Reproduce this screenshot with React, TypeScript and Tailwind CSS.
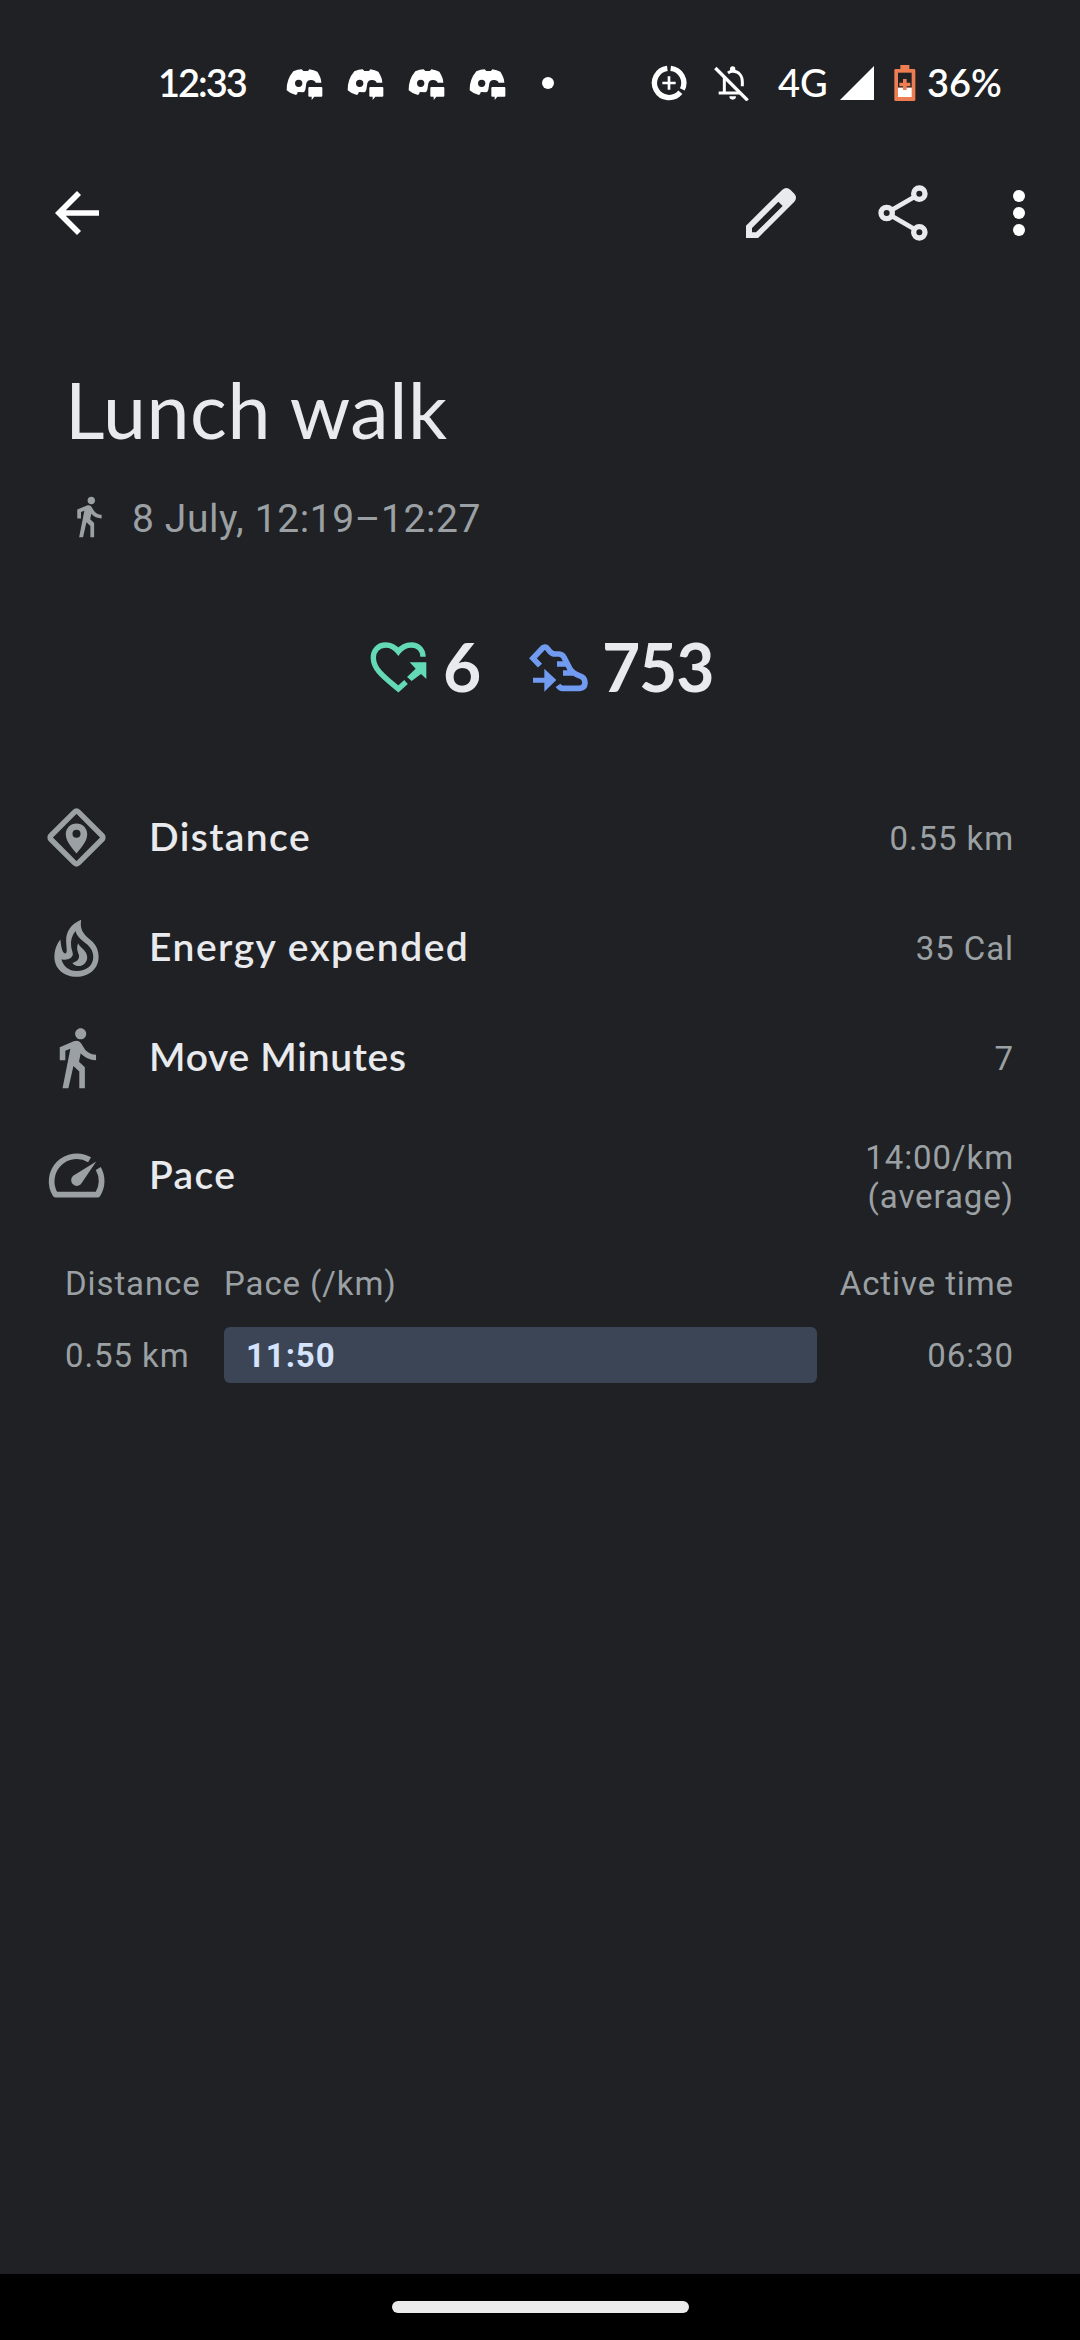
import type { ReactNode } from 'react'

const LATO = "font-['Lato','Liberation_Sans',sans-serif]"
const ROBOTO = "font-['Roboto','Liberation_Sans',sans-serif]"

interface Metric {
  label: string
  tracking: string
  lines: string[]
  icon: ReactNode
  height: string
}

function DiscordIcon() {
  return (
    <svg width="38" height="32" viewBox="0 0 114 96" className="shrink-0">
      <path
        fill="#fff"
        d="M22 7Q35 1 47 1L52 6H66L70 1Q84 3 94 8Q106 27 106 41H89Q86 33 76 33Q64 32 61 43L58 62Q56 70 50 70L38 69Q32 70 34 74L30 78Q12 74 2 64Q1 32 22 7Z"
      />
      <circle cx="38" cy="43" r="11" fill="#202124" />
      <path fill="#202124" d="M64 49h50v47H64z" />
      <path fill="#fff" d="M70 54h36q3 0 3 3v23q0 3-3 3H85l-8 10V83h-7q-3 0-3-3V57q0-3 3-3Z" />
    </svg>
  )
}

function DataSaverIcon() {
  return (
    <svg width="36" height="36" viewBox="0 0 108 108" fill="none" stroke="#fff" className="shrink-0">
      <path strokeWidth="16" d="M59 10A44 44 0 0 1 94 73" />
      <path strokeWidth="16" d="M49 10A44 44 0 1 0 88 82" />
      <path strokeWidth="8" d="M54 34V74M34 54H74" />
    </svg>
  )
}

function BellOffIcon() {
  return (
    <svg width="36" height="36" viewBox="0 0 108 108" fill="none" stroke="#fff" className="shrink-0">
      <path strokeWidth="9" d="M31 38V84M14 84H80M85 64V50C85 32 74 20 58 19Q50 18 42 24" />
      <path fill="#fff" stroke="none" d="M48 18V12a8 8 0 0 1 16 0v6ZM46 94H66a10 10 0 0 1-20 0Z" />
      <path strokeWidth="10" d="M4 9L101 106" />
    </svg>
  )
}

function BatteryIcon() {
  return (
    <svg width="22" height="36" viewBox="0 0 66 108" className="shrink-0">
      <path fill="#ee7e52" d="M19 0H46V12H60q4 0 4 4V104q0 4-4 4H5q-4 0-4-4V16q0-4 4-4H19Z" />
      <path fill="#202124" d="M12 23H53V68H12Z" />
      <path fill="#fff" d="M12 68H53V96H12Z" />
      <path fill="#ee7e52" d="M27 42h11v11h11v11H38v11H27V64H16V53H27Z" />
    </svg>
  )
}

function PencilIcon() {
  return (
    <svg width="50" height="50" viewBox="0 0 150 150">
      <path
        fill="#e8eaed"
        fillRule="evenodd"
        d="M0 150V113L109 5Q121-5 133 5L145 17Q155 29 145 41L36 150ZM18 133H30L110 54L97 41L18 120Z"
      />
    </svg>
  )
}

function ShareIcon() {
  return (
    <svg width="50" height="56" viewBox="0 0 150 168" fill="none" stroke="#e8eaed" strokeWidth="16">
      <circle cx="124" cy="26" r="17" />
      <circle cx="26" cy="84" r="17" />
      <circle cx="124" cy="142" r="17" />
      <path strokeWidth="14" d="M40 76L110 35M40 92L110 133" />
    </svg>
  )
}

function WalkIcon({ size }: { size: number }) {
  return (
    <svg width={size} height={size} viewBox="0 0 24 24" fill="#9aa0a3" className="shrink-0">
      <path d="M13.500 5.500c1.100 0 2-.9 2-2s-.9-2-2-2-2 .9-2 2 .9 2 2 2zM9.800 8.900L7 23h2.100l1.800-8 2.100 2v6h2v-7.500l-2.100-2 .6-3C14.800 12 16.800 13 19 13v-2c-1.900 0-3.500-1-4.300-2.400l-1-1.600c-.4-.6-1-1-1.700-1-.3 0-.5.1-.8.1L6 8.300V13h2V9.600l1.800-.7" />
    </svg>
  )
}

function HeartPointsIcon() {
  return (
    <svg width="57" height="52" viewBox="0 0 171 156" className="shrink-0">
      <path
        fill="none"
        stroke="#63dab4"
        strokeWidth="16"
        d="M159 47C159 26 144 12 124 12C107 12 94 20 85 32C76 20 63 12 47 12C25 12 10 28 10 50C10 86 45 110 85 144L108 123"
      />
      <path fill="#63dab4" d="M119 64H169V114L153 99L125 120L111 108L137 83Z" />
    </svg>
  )
}

function StepsIcon() {
  return (
    <svg width="59" height="50" viewBox="0 0 177 150" fill="none" stroke="#719bf0" strokeWidth="17">
      <path d="M33 71L12 49L41 18Q49 11 56 20L62 28Q69 36 79 36H90Q101 37 105 46L118 71Q126 91 142 97L158 104Q168 110 168 123Q167 138 151 139H101Q93 139 87 130" />
      <path d="M84 66H116M102 93H132" />
      <path stroke="none" fill="#719bf0" d="M12 107H46V80L82 114L46 149V122H12Z" />
    </svg>
  )
}

function DistanceIcon() {
  return (
    <svg width="67" height="67" viewBox="0 0 200 200" className="shrink-0">
      <path
        fill="none"
        stroke="#9aa0a3"
        strokeWidth="16"
        strokeLinejoin="round"
        d="M100 21Q103 21 106 24L176 94Q182 100 176 106L106 176Q100 182 94 176L24 106Q18 100 24 94L94 24Q97 21 100 21Z"
      />
      <path
        fill="#9aa0a3"
        fillRule="evenodd"
        d="M100 58C118 58 132 72 132 90C132 113 110 134 100 148C90 134 68 113 68 90C68 72 82 58 100 58ZM100 77a12 12 0 1 0 0 24a12 12 0 1 0 0-24Z"
      />
    </svg>
  )
}

function FlameIcon() {
  return (
    <svg width="67" height="67" viewBox="0 0 200 200" fill="#9aa0a3" className="shrink-0">
      <path
        fillRule="evenodd"
        d="M114 17C108 54 130 66 148 83C160 95 166 110 166 128C166 162 138 187 100 187C62 187 34 162 34 128C34 108 41 89 52 76C54 100 58 116 66 118C74 117 70 104 69 82C68 52 84 29 114 17ZM97 51C86 64 82 80 84 96C85 107 90 114 89 122C86 134 70 140 55 135C60 156 77 170 100 170C130 170 150 153 150 128C150 114 144 102 133 92C118 80 102 70 97 51Z"
      />
      <path d="M105 87C109 99 132 108 132 130C131 148 116 158 102 155C95 153 90 150 88 146C103 142 110 133 107 122C103 110 99 101 105 87Z" />
    </svg>
  )
}

function PaceIcon() {
  return (
    <svg width="67" height="67" viewBox="0 0 200 200" className="shrink-0">
      <path
        fill="none"
        stroke="#9aa0a3"
        strokeWidth="17"
        strokeLinejoin="round"
        d="M139 53A75 75 0 0 0 37 157H163A75 75 0 0 0 165 79"
      />
      <path fill="#9aa0a3" d="M159 58L116 122A17 17 0 1 1 90 101Z" />
    </svg>
  )
}

const METRICS: Metric[] = [
  { label: 'Distance', tracking: 'tracking-[1.4px]', lines: ['0.55 km'], icon: <DistanceIcon />, height: 'h-[110px]' },
  { label: 'Energy expended', tracking: 'tracking-[1.5px]', lines: ['35 Cal'], icon: <FlameIcon />, height: 'h-[110px]' },
  { label: 'Move Minutes', tracking: 'tracking-[0.7px]', lines: ['7'], icon: <WalkIcon size={67} />, height: 'h-[110px]' },
  { label: 'Pace', tracking: 'tracking-[1.4px]', lines: ['14:00/km', '(average)'], icon: <PaceIcon />, height: 'h-[126px]' },
]

function StatusBar() {
  return (
    <div className={`flex h-[126px] items-center pt-[40px] pr-[79px] pl-[158px] text-[38px] leading-none font-semibold text-white ${LATO}`}>
      <span className="w-[128px] pb-0.5 tracking-[-2px]">12:33</span>
      <div className="flex gap-[23px] pt-1">
        <DiscordIcon />
        <DiscordIcon />
        <DiscordIcon />
        <DiscordIcon />
      </div>
      <span className="ml-[35px] size-3 rounded-full bg-white" />
      <div className="ml-auto flex items-center">
        <DataSaverIcon />
        <div className="ml-[27px]">
          <BellOffIcon />
        </div>
        <span className="ml-[28px] w-[62px] pb-0.5 font-medium">4G</span>
        <svg width="34" height="34" viewBox="0 0 34 34" className="shrink-0">
          <path fill="#fff" d="M34 0V34H0Z" />
        </svg>
        <div className="mr-[11px] ml-5">
          <BatteryIcon />
        </div>
        <span className="w-[74px] pb-0.5">36%</span>
      </div>
    </div>
  )
}

function TopBar() {
  return (
    <div className="flex h-[174px] items-center px-[55px]">
      <svg width="44" height="44" viewBox="0 0 132 132" fill="none" stroke="#fff" strokeWidth="17">
        <path d="M72 6L12 66L72 126M12 66H132" />
      </svg>
      <div className="ml-auto flex items-center">
        <PencilIcon />
        <div className="ml-[82px]">
          <ShareIcon />
        </div>
        <div className="ml-[85px] flex flex-col gap-[5px]">
          <span className="size-3 rounded-full bg-white" />
          <span className="size-3 rounded-full bg-white" />
          <span className="size-3 rounded-full bg-white" />
        </div>
      </div>
    </div>
  )
}

export default function App() {
  return (
    <div className={`flex h-[2340px] w-[1080px] flex-col overflow-hidden bg-[#202124] text-[#9aa0a3] ${ROBOTO}`}>
      <StatusBar />
      <TopBar />

      <h1 className={`mt-16 pl-[65px] text-[77px] leading-[90px] font-normal tracking-[0.6px] text-[#e8eaed] ${LATO}`}>Lunch walk</h1>
      <div className="mt-10 flex h-[45px] items-center pl-[66px]">
        <WalkIcon size={45} />
        <span className="ml-[21px] pt-[5px] text-[39px] leading-none tracking-[0.6px]">8 July, 12:19–12:27</span>
      </div>

      {/* Heart points and steps */}
      <div className={`mt-[90px] flex h-[76px] items-center pl-[370px] text-[66px] leading-none font-bold text-[#e8eaed] ${LATO}`}>
        <HeartPointsIcon />
        <span className="ml-[16px] w-[86px]">6</span>
        <StepsIcon />
        <span className="ml-[14px] tracking-[-1.200px]">753</span>
      </div>

      <div className="mt-[77px]">
        {METRICS.map((m) => (
          <div key={m.label} className={`flex items-center pr-[66px] pl-[43px] ${m.height}`}>
            {m.icon}
            <span className={`ml-[39px] pb-[2px] text-[39px] leading-none font-semibold text-[#e8eaed] ${LATO} ${m.tracking}`}>{m.label}</span>
            <div className="ml-auto pt-[3px] text-right text-[33px] leading-[39px] tracking-[0.9px]">
              {m.lines.map((line) => (
                <div key={line}>{line}</div>
              ))}
            </div>
          </div>
        ))}
      </div>

      {/* Splits */}
      <div className="mt-[26px] flex flex-col gap-[23px] pr-[66px] pl-[65px] text-[33px] leading-[40px] tracking-[0.9px]">
        <div className="flex">
          <span className="w-[159px]">Distance</span>
          <span>Pace (/km)</span>
          <span className="ml-auto">Active time</span>
        </div>
        <div className="flex items-center">
          <span className="w-[159px] pt-0.5">0.55 km</span>
          <div className="flex h-14 w-[593px] items-center rounded-md bg-[#3c4556] pt-0.5 pl-[22px] font-bold text-[#d6e3fd]">11:50</div>
          <span className="ml-auto pt-0.5">06:30</span>
        </div>
      </div>

      <div className="mt-auto flex h-[66px] items-center justify-center bg-black">
        <div className="h-3 w-[297px] rounded-full bg-[#ebebeb]" />
      </div>
    </div>
  )
}
